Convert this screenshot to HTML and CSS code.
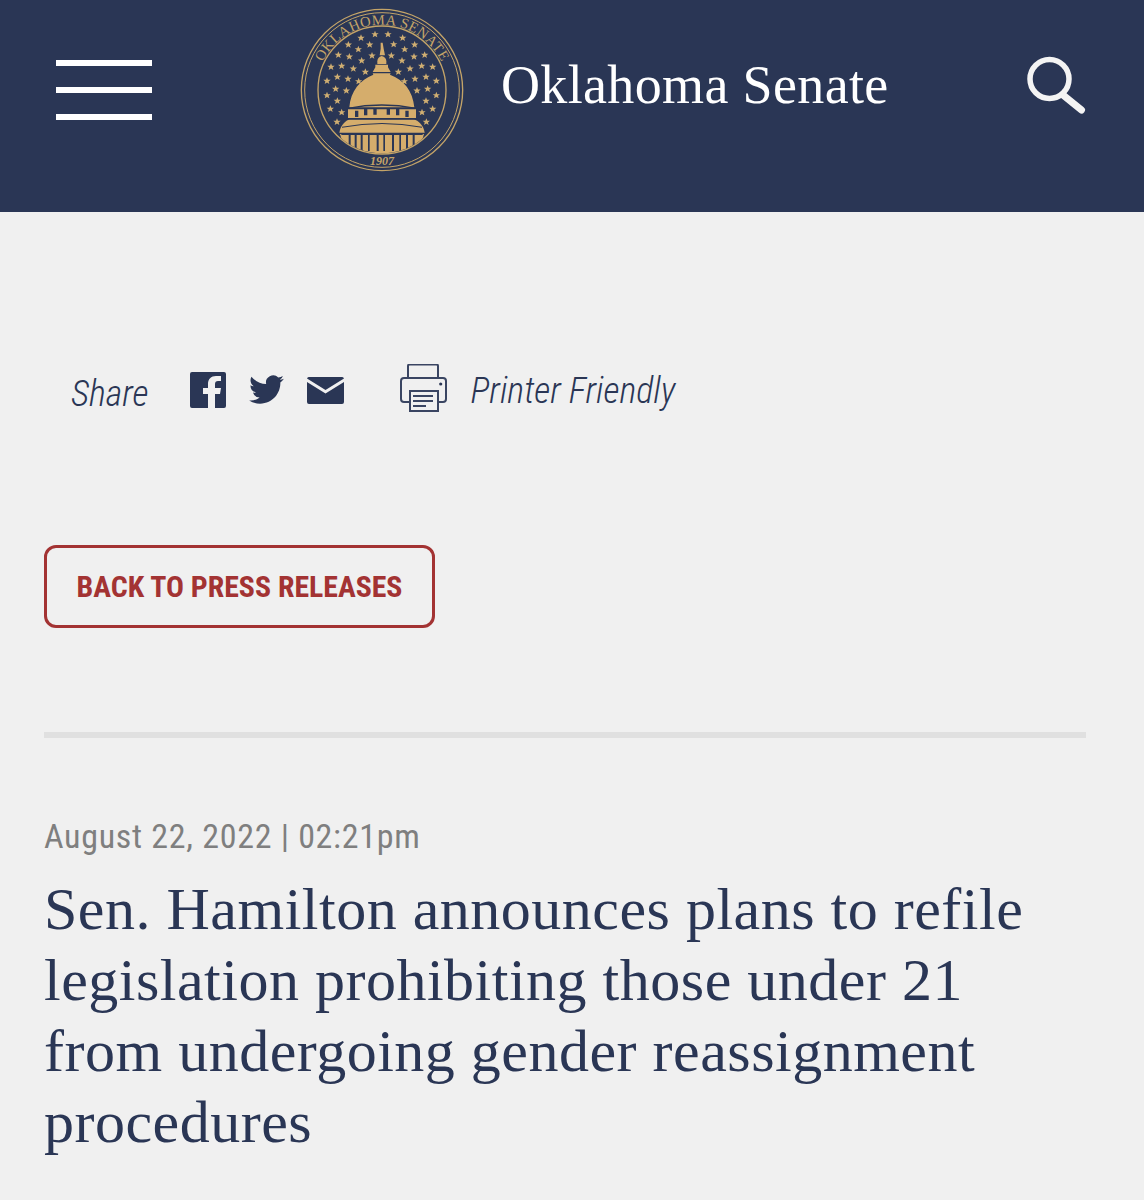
FILE: index.html
```html
<!DOCTYPE html>
<html lang="en">
<head>
<meta charset="utf-8">
<title>Oklahoma Senate</title>
<link rel="stylesheet" href="styles.css">
</head>
<body>
<header class="site-header">
  <button class="menu" aria-label="Menu"><span></span><span></span><span></span></button>
  <svg class="seal" viewBox="-246 -246 492 492" aria-hidden="true">
    <defs>
      <polygon id="s" points="0,-11 3,-3.400 11,-3.400 4.800,1.600 7,9 0,4.800 -7,9 -4.800,1.600 -11,-3.400 -3,-3.400"/>
      <path id="arc" d="M -188 60 A 197 197 0 1 1 188 60"/>
      <clipPath id="inner"><circle r="190"/></clipPath>
    </defs>
    <circle r="242" class="ring"/>
    <circle r="232" class="ring thin"/>
    <circle r="192" class="ring"/>
    <text class="seal-name"><textPath href="#arc" startOffset="50%">OKLAHOMA SENATE</textPath></text>
    <text class="seal-year" x="0" y="224">1907</text>
    <g class="stars" transform="translate(-278 -270)">
      <use href="#s" x="257" y="103"/><use href="#s" x="296" y="103"/><use href="#s" x="215" y="114"/><use href="#s" x="340" y="114"/>
      <use href="#s" x="177" y="134"/><use href="#s" x="376" y="134"/><use href="#s" x="241" y="134"/><use href="#s" x="313" y="133"/>
      <use href="#s" x="207" y="148"/><use href="#s" x="346" y="148"/><use href="#s" x="147" y="165"/><use href="#s" x="180" y="170"/>
      <use href="#s" x="248" y="167"/><use href="#s" x="306" y="167"/><use href="#s" x="374" y="170"/><use href="#s" x="406" y="165"/>
      <use href="#s" x="217" y="182"/><use href="#s" x="338" y="182"/><use href="#s" x="125" y="201"/><use href="#s" x="157" y="198"/>
      <use href="#s" x="192" y="206"/><use href="#s" x="362" y="206"/><use href="#s" x="397" y="198"/><use href="#s" x="430" y="201"/>
      <use href="#s" x="228" y="216"/><use href="#s" x="327" y="216"/><use href="#s" x="144" y="231"/><use href="#s" x="176" y="237"/>
      <use href="#s" x="377" y="237"/><use href="#s" x="410" y="231"/><use href="#s" x="113" y="243"/><use href="#s" x="208" y="244"/>
      <use href="#s" x="345" y="244"/><use href="#s" x="441" y="243"/><use href="#s" x="139" y="267"/><use href="#s" x="171" y="272"/>
      <use href="#s" x="383" y="272"/><use href="#s" x="415" y="267"/><use href="#s" x="113" y="286"/><use href="#s" x="441" y="286"/>
      <use href="#s" x="144" y="303"/><use href="#s" x="410" y="303"/><use href="#s" x="123" y="327"/><use href="#s" x="157" y="337"/>
      <use href="#s" x="398" y="337"/><use href="#s" x="430" y="327"/><use href="#s" x="143" y="366"/><use href="#s" x="411" y="366"/>
    </g>
    <g clip-path="url(#inner)">
      <g class="dome" transform="translate(-278 -270)">
        <path d="M274 128h6l3 18 4 20h-16l3-20z"/>
        <path d="M264 184q0-12 13-16 14 4 14 16v8h-27z"/>
        <path d="M258 194h38v8l8 14h-54l8-14z"/>
        <path d="M180 322c4-50 32-82 72-98l-2-4h54l-2 4c42 16 68 48 73 98z"/>
        <path d="M176 328h204v26h-204z"/>
        <path d="M150 398c4-24 20-36 30-40h194c12 4 28 16 32 40z"/>
        <path d="M152 402h252l-18 60h-216z"/>
      </g>
      <g class="dome-cuts" transform="translate(-278 -270)">
        <path d="M197 332h10v19h-10zM224 326h10v20h-10zM252 324h10v20h-10zM292 324h10v20h-10zM320 326h10v20h-10zM348 332h10v19h-10z"/>
        <path d="M176 323q100-20 204 0l1 4q-104-20-206 0z"/>
        <path d="M172 356h212v3h-212zM158 380q120-22 240 0v3q-120-22-240 0z"/>
        <path d="M156 402h244v3h-244zM178 405h6v44h-6zM196 403h6v50h-6zM214 403h6v50h-6zM236 403h5v50h-5zM262 403h6v50h-6zM282 403h5v50h-5zM308 403h6v50h-6zM330 403h5v50h-5zM350 403h6v50h-6zM370 403h6v44h-6z"/>
      </g>
    </g>
  </svg>
  <a class="site-title">Oklahoma Senate</a>
  <svg class="search" viewBox="0 0 58 56" aria-hidden="true">
    <circle cx="22.500" cy="21" r="19.500"/>
    <path class="handle" d="M36 37 L54.500 52"/>
  </svg>
</header>
<main class="content">
  <div class="share-row">
    <span class="label share-label">Share</span>
    <svg class="icon fb" viewBox="0 0 36 36" aria-hidden="true"><path fill-rule="evenodd" d="M2 0h32a2 2 0 0 1 2 2v32a2 2 0 0 1-2 2H25V22h5l1-6h-6v-4c0-2 1-3 3-3h3V4h-5c-5 0-8 3-8 8v4h-5v6h5v14H2a2 2 0 0 1-2-2V2a2 2 0 0 1 2-2z"/></svg>
    <svg class="icon tw" viewBox="0 0 24 20" aria-hidden="true"><path transform="translate(0 -2)" d="M23.953 4.57a10 10 0 01-2.825.775 4.958 4.958 0 002.163-2.723c-.951.555-2.005.959-3.127 1.184a4.92 4.92 0 00-8.384 4.482C7.69 8.095 4.067 6.13 1.64 3.162a4.822 4.822 0 00-.666 2.475c0 1.71.87 3.213 2.188 4.096a4.904 4.904 0 01-2.228-.616v.06a4.923 4.923 0 003.946 4.827 4.996 4.996 0 01-2.212.085 4.936 4.936 0 004.604 3.417 9.867 9.867 0 01-6.102 2.105c-.39 0-.779-.023-1.17-.067a13.995 13.995 0 007.557 2.209c9.053 0 13.998-7.496 13.998-13.985 0-.21 0-.42-.015-.63A9.935 9.935 0 0024 4.59z"/></svg>
    <svg class="icon mail" viewBox="0 0 37 27" aria-hidden="true"><path d="M2 0h33a2 2 0 0 1 2 1.500L18.500 13 0 1.500A2 2 0 0 1 2 0z"/><path d="M0 5v20a2 2 0 0 0 2 2h33a2 2 0 0 0 2-2V5L18.500 16.500z"/></svg>
    <svg class="printer" viewBox="0 0 48 48" aria-hidden="true">
      <path d="M8 14V2a1.500 1.500 0 0 1 1.500-1.500h27A1.500 1.500 0 0 1 38 2v12"/>
      <path d="M10 38H4a3 3 0 0 1-3-3V17a3 3 0 0 1 3-3h39a3 3 0 0 1 3 3v18a3 3 0 0 1-3 3h-5"/>
      <path d="M10 27h28v20H10z"/>
      <path class="thin" d="M13 32h20M13 37h20M13 42h13"/>
      <circle class="dot" cx="40.700" cy="20" r="1.600"/>
    </svg>
    <span class="label printer-label">Printer Friendly</span>
  </div>
  <a class="back">BACK TO PRESS RELEASES</a>
  <hr class="rule">
  <p class="date">August 22, 2022 | 02:21pm</p>
  <h1 class="headline">Sen. Hamilton announces plans to refile legislation prohibiting those under 21 from undergoing gender reassignment procedures</h1>
</main>
</body>
</html>
```
FILE: styles.css
```css
* { box-sizing: border-box; }
html, body { margin: 0; height: 1200px; overflow: hidden; }
body { background: #f0f0f0; color: #2a3655; font-family: "Roboto", "Liberation Sans", sans-serif; }

.site-header {
  height: 212px;
  background: #2a3655;
  display: flex;
  align-items: center;
  padding: 0 59px 32px 56px;
}
.menu {
  width: 96px; height: 60px; padding: 0; border: 0; background: none;
  display: flex; flex-direction: column; justify-content: space-between;
}
.menu span { display: block; height: 6px; background: #fff; }
.seal { width: 164px; height: 164px; margin-left: 148px; flex: none; }
.ring { fill: none; stroke: #c4a468; stroke-width: 4; }
.ring.thin { stroke-width: 3; }
.seal-name { font: 44px "Liberation Serif", serif; letter-spacing: 1px; fill: #c4a468; text-anchor: middle; }
.seal-year { font: italic bold 36px "Liberation Serif", serif; fill: #c4a468; text-anchor: middle; }
.stars { fill: #cfae72; }
.dome { fill: #d5ad6c; }
.dome-cuts { fill: #2a3655; }
.site-title {
  margin-left: 37px; margin-top: -10px;
  font: 54px/1 "Liberation Serif", serif; letter-spacing: .35px; color: #fff;
  white-space: nowrap;
}
.search { width: 58px; height: 56px; margin-left: auto; margin-top: -8px; fill: none; stroke: #f4f4f4; stroke-width: 5.500; stroke-linecap: round; flex: none; overflow: visible; }
.search .handle { stroke-width: 7; }

.content { padding: 0 58px 0 44px; }
.share-row { display: flex; align-items: center; height: 48px; margin-top: 152px; padding-left: 27px; }
.label { font-size: 36px; font-weight: 300; font-style: italic; font-stretch: 75%; color: #2a3655; white-space: nowrap; }
.share-label { margin-right: 41px; margin-top: 12px; }
.printer-label { margin-top: 6px; }
.icon { fill: #2a3655; flex: none; }
.fb { width: 36px; height: 36px; margin: 4px 23px 0 0; }
.tw { width: 35px; height: 29px; margin: 2px 23px 0 0; }
.mail { width: 37px; height: 27px; margin: 4px 56px 0 0; }
.printer { width: 48px; height: 48px; margin-right: 23px; flex: none; fill: none; stroke: #3a4562; stroke-width: 2; }
.printer .thin { stroke-width: 1.800; }
.printer .dot { fill: #2a3655; stroke: none; }

.back {
  display: flex; align-items: center; justify-content: center;
  width: 391px; height: 83px; margin-top: 133px;
  border: 3px solid #a33333; border-radius: 12px;
  color: #a33333; font-size: 29.800px; font-weight: 700; font-stretch: 75%;
  white-space: nowrap;
}
.rule { height: 6px; margin: 104px 0 0; border: 0; background: #e0e0e0; }
.date { margin: 76px 0 0; font-size: 34px; line-height: 44px; color: #7f7f7f; font-stretch: 75%; letter-spacing: .7px; white-space: nowrap; }
.headline { margin: 16px 0 0; font: 400 60px/71px "Liberation Serif", serif; letter-spacing: .5px; font-variant-numeric: oldstyle-nums; color: #2a3655; }
```
